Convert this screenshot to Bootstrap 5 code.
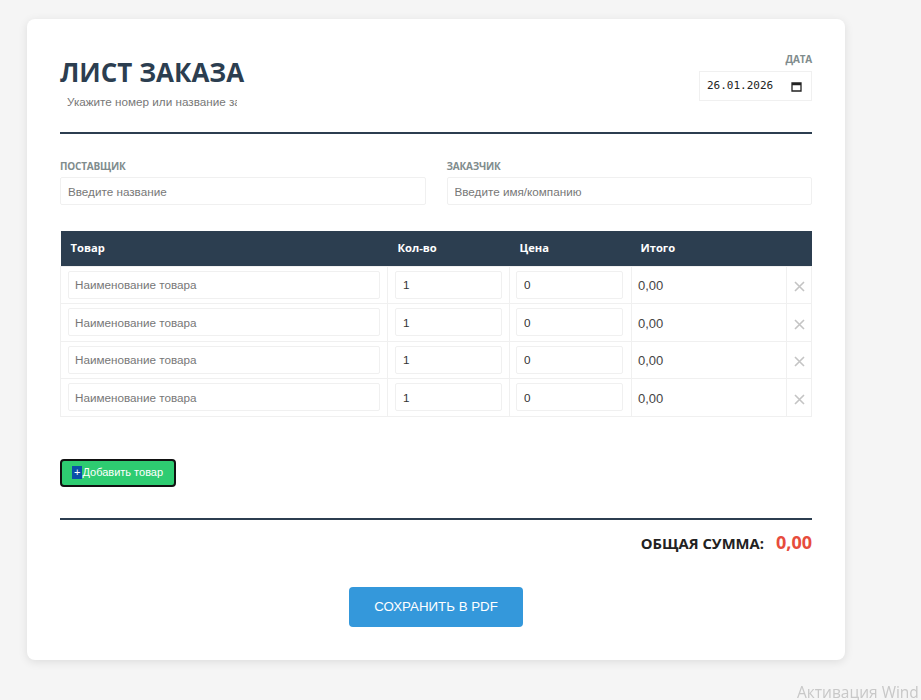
<!DOCTYPE html>
<html lang="ru">
<head>
    <meta charset="UTF-8">
    <title>Лист заказа</title>
    <link href="https://cdn.jsdelivr.net/npm/bootstrap@5.3.0/dist/css/bootstrap.min.css" rel="stylesheet">
    <script src="https://cdn.jsdelivr.net/npm/bootstrap@5.3.0/dist/js/bootstrap.bundle.min.js"></script>
    <style>
        html, body { height: 100%; overflow: hidden; }
        body {
            background: #f5f5f5;
            font-family: "Liberation Sans", Arial, sans-serif;
            font-size: 13px;
            color: #333;
            padding: 19px 0 0 27px;
        }
        .order-sheet {
            width: 818px;
            height: 641px;
            background: #fff;
            border-radius: 8px;
            box-shadow: 0 2px 10px rgba(0,0,0,.1);
            padding: 33px;
        }
        .sheet-head {
            height: 82px;
            border-bottom: 2px solid #2c3e50;
        }
        .sheet-title {
            font-family: "Open Sans", sans-serif;
            font-weight: 700;
            font-size: 26px;
            line-height: 38px;
            color: #2c3e50;
            margin: 1px 0 0;
        }
        .plain-input, .box-input {
            font-family: "Liberation Sans", Arial, sans-serif;
            font-size: 11.7px;
            color: #333;
            outline: none;
        }
        .plain-input::placeholder, .box-input::placeholder { color: #777; opacity: 1; }
        .plain-input {
            width: 178px;
            height: 20px;
            border: 0;
            padding: 0 1px 0 7px;
            display: block;
        }
        .box-input {
            display: block;
            width: 100%;
            height: 28px;
            border: 1px solid #f0f0f0;
            border-radius: 2px;
            padding: 0 7px;
        }
        .date-box {
            width: 113px;
            height: 30px;
            border: 1px solid #f0f0f0;
            padding: 0 9px 0 7px;
        }
        .date-box input {
            font-family: "DejaVu Sans Mono", monospace;
            font-size: 11px;
            width: 76px;
            border: 0;
            padding: 0;
            color: #222;
            outline: none;
        }
        .field-label {
            font-family: "Open Sans", sans-serif;
            font-weight: 700;
            font-size: 10px;
            letter-spacing: -.2px;
            line-height: 12px;
            color: #7f8c8d;
            text-transform: uppercase;
            display: block;
            margin-bottom: 5px;
        }
        .date-label { margin: 1px 0 6px; }
        .parties { margin-top: 26px; gap: 21px; }
        .parties > div { flex: 1 1 0; }
        .goods-table {
            table-layout: fixed;
            width: 751px;
            margin: 26px 0 0;
            border-collapse: collapse;
        }
        .goods-table th {
            background: #2c3e50;
            color: #fff;
            font-family: "Open Sans", sans-serif;
            font-weight: 700;
            font-size: 11.2px;
            height: 35px;
            padding: 0 10px;
            vertical-align: middle;
            border: 0;
        }
        .goods-table th:nth-child(4) { padding-left: 9px; }
        .goods-table td {
            height: 37.5px;
            padding: 0 7px;
            border: 1px solid #f0f0f0;
            vertical-align: middle;
        }
        .goods-table td:nth-child(1) .box-input { padding-left: 6px; }
        .goods-table td:nth-child(3) { padding: 0 8px 0 6px; }
        .goods-table .box-input { height: 28px; }
        .goods-table td.cell-sum { font-size: 13px; padding: 2px 6px 0; color: #444; }
        .goods-table td.cell-del { padding: 2px 0 0; text-align: center; }
        .del-btn { border: 0; background: none; padding: 0; line-height: 0; }
        .add-btn {
            width: 116px;
            height: 28px;
            margin-top: 42px;
            background: #2ecc71;
            border: 2px solid #111;
            border-radius: 4px;
            color: #fff;
            font-size: 11px;
            padding: 0 0 0 10px;
            display: flex;
            align-items: center;
        }
        .add-btn .plus-mark { background: #0b4fa8; color: #fff; padding: 0 2px; line-height: 13px; }
        .sum-row {
            margin-top: 31px;
            border-top: 2px solid #2c3e50;
            padding-top: 9px;
            height: 69px;
            color: #222;
            font-family: "Open Sans", sans-serif;
            font-weight: 700;
            gap: 12px;
        }
        .sum-label { font-size: 14.8px; line-height: 28px; }
        .sum-value { font-size: 18px; line-height: 26px; color: #e74c3c; }
        .save-btn {
            width: 174px;
            height: 40px;
            background: #3498db;
            border: 0;
            border-radius: 4px;
            color: #fff;
            font-size: 13.3px;
            padding: 0;
        }
        .win-mark {
            position: fixed;
            left: 797px;
            top: 682px;
            font-family: "Open Sans", sans-serif;
            font-size: 15.5px;
            line-height: 20px;
            color: #c8c8c8;
            white-space: nowrap;
        }
    </style>
</head>
<body>
    <div class="order-sheet">
        <div class="sheet-head d-flex justify-content-between">
            <div>
                <h1 class="sheet-title">ЛИСТ ЗАКАЗА</h1>
                <input class="plain-input" type="text" placeholder="Укажите номер или название заказа">
            </div>
            <div class="text-end">
                <label class="field-label date-label">Дата</label>
                <div class="date-box d-flex align-items-center justify-content-between">
                    <input type="text" value="26.01.2026">
                    <svg width="11" height="11" viewBox="0 0 11 11"><path d="M1 2h9v8H1zM1 3.5h9" stroke="#222" stroke-width="1.3" fill="none"/></svg>
                </div>
            </div>
        </div>

        <div class="parties d-flex">
            <div>
                <label class="field-label">Поставщик</label>
                <input class="box-input" type="text" placeholder="Введите название">
            </div>
            <div>
                <label class="field-label">Заказчик</label>
                <input class="box-input" type="text" placeholder="Введите имя/компанию">
            </div>
        </div>

        <table class="goods-table">
            <colgroup>
                <col style="width:327px"><col style="width:122px"><col style="width:122px"><col style="width:155px"><col style="width:25px">
            </colgroup>
            <thead>
                <tr><th>Товар</th><th>Кол-во</th><th>Цена</th><th>Итого</th><th></th></tr>
            </thead>
            <tbody id="goods"></tbody>
        </table>

        <button class="add-btn" type="button"><span class="plus-mark">+</span>Добавить товар</button>

        <div class="sum-row d-flex justify-content-end">
            <span class="sum-label">ОБЩАЯ СУММА:</span>
            <span class="sum-value">0,00</span>
        </div>

        <div class="text-center">
            <button class="save-btn" type="button">СОХРАНИТЬ В PDF</button>
        </div>
    </div>
    <div class="win-mark">Активация Wind</div>

    <script>
        // четыре пустые строки товара
        const goods = document.getElementById('goods');
        for (let i = 0; i < 4; i++) {
            const tr = document.createElement('tr');
            tr.innerHTML = `
                <td><input class="box-input" type="text" placeholder="Наименование товара"></td>
                <td><input class="box-input" type="text" value="1"></td>
                <td><input class="box-input" type="text" value="0"></td>
                <td class="cell-sum">0,00</td>
                <td class="cell-del"><button class="del-btn" type="button" aria-label="Удалить">
                    <svg width="11" height="11" viewBox="0 0 11 11"><path d="M1 1l9 9M10 1l-9 9" stroke="#c4c4c4" stroke-width="1.6" fill="none"/></svg>
                </button></td>`;
            goods.appendChild(tr);
        }
    </script>
</body>
</html>
